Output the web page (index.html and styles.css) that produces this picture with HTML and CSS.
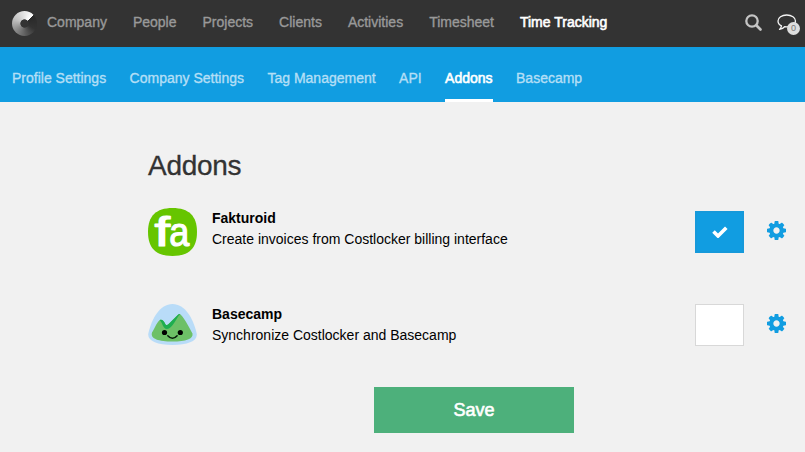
FILE: index.html
```html
<!DOCTYPE html>
<html lang="en">
<head>
<meta charset="utf-8">
<title>Addons</title>
<link rel="stylesheet" href="styles.css">
</head>
<body>
<svg class="defs" width="0" height="0">
  <symbol id="cog" viewBox="0 128 1536 1536"><path d="M1024 896q0-106-75-181t-181-75-181 75-75 181 75 181 181 75 181-75 75-181zm512-109v222q0 12-8 23t-20 13l-185 28q-19 54-39 91 35 50 107 138 10 12 10 25t-9 23q-27 37-99 108t-94 71q-12 0-26-9l-138-108q-44 23-91 38-16 136-29 186-7 28-36 28h-222q-14 0-24.500-8.500t-11.500-21.500l-28-184q-49-16-90-37l-141 107q-10 9-25 9-14 0-25-11-126-114-165-168-7-10-7-23 0-12 8-23 15-21 51-66.500t54-70.500q-27-50-41-99l-183-27q-13-2-21-12.500t-8-23.500v-222q0-12 8-23t19-13l186-28q14-46 39-92-40-57-107-138-10-12-10-24 0-10 9-23 26-36 98.500-107.500t94.500-71.500q13 0 26 10l138 107q44-23 91-38 16-136 29-186 7-28 36-28h222q14 0 24.500 8.500t11.500 21.500l28 184q49 16 90 37l142-107q9-9 24-9 13 0 25 10 129 119 165 170 7 8 7 22 0 12-8 23-15 21-51 66.500t-54 70.500q26 50 41 98l183 28q13 2 21 12.500t8 23.500z"/></symbol>
</svg>
<header class="topbar">
  <div class="logo"></div>
  <nav class="menu">
    <a>Company</a><a>People</a><a>Projects</a><a>Clients</a><a>Activities</a><a>Timesheet</a><a class="active">Time Tracking</a>
  </nav>
  <div class="tools">
    <svg class="search" viewBox="0 0 18 18"><circle cx="7" cy="7" r="5.700" fill="none" stroke="#c4c4c4" stroke-width="2.300"/><path d="M11.500 11.500L15.500 15.500" stroke="#c4c4c4" stroke-width="2.700" stroke-linecap="round"/></svg>
    <div class="chat">
      <svg viewBox="0 0 20 18"><path d="M9.700 1C4.700 1 1 3.500 1 6.900c0 2.100 1.300 3.900 3.500 4.900-.2 1.400-.8 2.600-2 3.600 2.200-.2 3.800-1.200 5.100-2.700 6 .7 10.900-1.900 10.900-5.800C18.500 3.500 14.700 1 9.700 1z" fill="none" stroke="#f4f4f4" stroke-width="1.300" stroke-linejoin="round"/></svg>
      <span class="badge">0</span>
    </div>
  </div>
</header>
<nav class="subbar">
  <a>Profile Settings</a><a>Company Settings</a><a>Tag Management</a><a>API</a><a class="active">Addons</a><a>Basecamp</a>
</nav>
<main class="content">
  <h1>Addons</h1>
  <section class="addon">
    <svg class="fakturoid" viewBox="0 0 49 48">
      <path d="M24.500 0C41 0 49 8 49 24S41 48 24.500 48 0 40 0 24 8 0 24.500 0z" fill="#66c500"/>
      <g class="mark"><text transform="translate(6.500 37.700) scale(1.400 1)" font-size="40">f</text><text transform="translate(21.300 37.500) scale(.9 1)" font-size="40">a</text></g>
    </svg>
    <div class="info"><h2>Fakturoid</h2><p>Create invoices from Costlocker billing interface</p></div>
    <div class="box checked"><svg viewBox="0 0 16 12"><path d="M1.500 5.500L6 10 14.300 1.700" fill="none" stroke="#fff" stroke-width="3.600"/></svg></div>
    <svg class="cog"><use href="#cog"/></svg>
  </section>
  <section class="addon second">
    <svg class="basecamp" viewBox="0 0 49 42">
      <path d="M24.500 0C12 0 4 14 .3 29.500-.8 37 9 41 24.500 41S50 37 48.700 29.500C45 14 37 0 24.500 0z" fill="#b9dcf8"/>
      <path d="M4 28.500C7 23.500 9.500 17 12 15.900c2.500-1 4 1.500 5 3.600 1 1.800 2 2.200 3.600.6L30 10.700c1.300-1.200 2.200-.7 3 .3 4.200 4.500 8.300 12.500 11.500 18.500C45.500 35 38 37.500 24.500 37.500S2 35 4 28.500z" fill="#6dc067"/>
      <path d="M11.500 16.200c2.700-1.300 4.500 1.200 5.500 3.300 1 1.800 2 2.200 3.600.6L30 10.700c.8-.8 1.500-.9 2.100-.5C29 12.500 24.500 25 19 25c-4.500 0-4.500-7.500-7.500-8.800z" fill="#1eae50"/>
      <circle cx="16.500" cy="28.500" r="2.600"/><circle cx="32.300" cy="28.500" r="2.600"/>
      <path d="M19.800 31.700q4.700 5.300 9.300 0" fill="none" stroke="#071b0b" stroke-width="1.500" stroke-linecap="round"/>
    </svg>
    <div class="info"><h2>Basecamp</h2><p>Synchronize Costlocker and Basecamp</p></div>
    <div class="box"></div>
    <svg class="cog"><use href="#cog"/></svg>
  </section>
  <button class="save">Save</button>
</main>
</body>
</html>
```
FILE: styles.css
```css
* { box-sizing: border-box; }
body {
  margin: 0;
  height: 452px;
  overflow: hidden;
  background: #f1f1f1;
  color: #000;
  font: 14px/20px "Liberation Sans", Arial, sans-serif;
}
.defs { display: block; height: 0; }
.topbar {
  display: flex;
  height: 47px;
  padding-left: 12px;
  background: #333;
}
.logo {
  width: 25px;
  height: 25px;
  margin: 11px 10px 0 0;
  border-radius: 50%;
  background:
    radial-gradient(circle, #333 3.800px, transparent 4.500px),
    conic-gradient(from 48deg, #292929 0deg, #333 70deg, #505050 110deg, #888 180deg, #c4c4c4 250deg, #fff 358deg, #292929 360deg);
}
.menu {
  display: flex;
  gap: 26px;
  padding-top: 12px;
  color: #999;
  -webkit-text-stroke: .35px;
}
.active {
  color: #fff;
  -webkit-text-stroke: .6px;
}
.tools {
  display: flex;
  margin-left: auto;
}
.search {
  width: 18px;
  height: 18px;
  margin: 14px 14px 0 0;
}
.chat {
  position: relative;
  width: 28px;
  padding-top: 14px;
}
.chat svg {
  display: block;
  width: 20px;
  height: 18px;
}
.badge {
  position: absolute;
  left: 10px;
  top: 22px;
  width: 13px;
  height: 13px;
  border-radius: 50%;
  background: #dedede;
  color: #777;
  font-size: 9px;
  line-height: 13px;
  text-align: center;
}
.subbar {
  display: flex;
  gap: 23.450px;
  height: 55px;
  padding: 21px 0 0 12px;
  background: #119de1;
  color: #b4dff6;
  -webkit-text-stroke: .35px;
}
.subbar .active { border-bottom: 3px solid #fff; }
.content {
  width: 652px;
  margin-left: 148px;
  padding-top: 44px;
}
h1 {
  margin: 0;
  height: 62px;
  color: #333;
  font-size: 28px;
  font-weight: 400;
  line-height: 40px;
  letter-spacing: -.3px;
  -webkit-text-stroke: .3px;
}
.addon {
  display: flex;
  align-items: flex-start;
  height: 95px;
}
.fakturoid {
  width: 49px;
  height: 48px;
}
.mark {
  fill: #fff;
  stroke: #fff;
  stroke-width: 1.200px;
  stroke-linejoin: round;
}
.basecamp {
  width: 49px;
  height: 42px;
  margin-top: 1px;
}
.info {
  width: 483px;
  margin-left: 15px;
}
h2 {
  margin: 0;
  font-size: 14px;
  line-height: 21px;
}
p {
  margin: 0;
  line-height: 21px;
}
.second .info { padding-top: 1px; }
.box {
  display: flex;
  align-items: center;
  justify-content: center;
  width: 49px;
  height: 42px;
  margin-top: 1px;
  border: 1px solid #d8d8d8;
  background: #fff;
}
.checked {
  margin-top: 3px;
  border: 2px solid #1699da;
  background: #119de1;
}
.checked svg {
  width: 16px;
  height: 12px;
}
.cog {
  width: 19px;
  height: 19px;
  margin: 13px 0 0 23px;
  fill: #119de1;
}
.second .cog { margin-top: 11px; }
.save {
  display: block;
  width: 200px;
  height: 46px;
  margin: -11px 0 0 226px;
  padding: 0;
  border: 0;
  background: #4db07b;
  color: #fff;
  font: 18px/46px "Liberation Sans", Arial, sans-serif;
  -webkit-text-stroke: .6px;
}
```
